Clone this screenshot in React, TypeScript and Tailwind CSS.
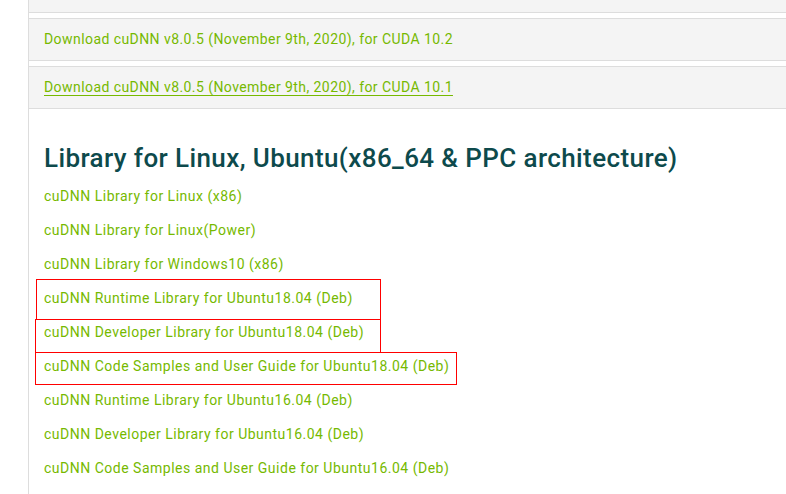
import React from 'react';

const downloads = [
  { label: 'Download cuDNN v8.0.5 (November 9th, 2020), for CUDA 10.2', hover: false },
  { label: 'Download cuDNN v8.0.5 (November 9th, 2020), for CUDA 10.1', hover: true },
];

const links = [
  'cuDNN Library for Linux (x86)',
  'cuDNN Library for Linux(Power)',
  'cuDNN Library for Windows10 (x86)',
  'cuDNN Runtime Library for Ubuntu18.04 (Deb)',
  'cuDNN Developer Library for Ubuntu18.04 (Deb)',
  'cuDNN Code Samples and User Guide for Ubuntu18.04 (Deb)',
  'cuDNN Runtime Library for Ubuntu16.04 (Deb)',
  'cuDNN Developer Library for Ubuntu16.04 (Deb)',
  'cuDNN Code Samples and User Guide for Ubuntu16.04 (Deb)',
];

export default function App() {
  return (
    <div className="w-[786px] h-[494px] overflow-hidden bg-white font-['Roboto',sans-serif]">
      <div className="ml-[28px] border-l border-[#dddddd] h-full flex flex-col">
        {/* previous panel, scrolled mostly out of view */}
        <div className="h-[13px] bg-[#f4f4f4] border-b border-[#dddddd]" />

        {downloads.map((d) => (
          <div
            key={d.label}
            className="mt-[5px] h-[43px] bg-[#f4f4f4] border-y border-[#dddddd] flex items-center pl-[15px]"
          >
            <a
              className={
                'text-[14px] text-[#76b900] tracking-[0.43px] ' +
                (d.hover ? 'underline underline-offset-[3px]' : '')
              }
            >
              {d.label}
            </a>
          </div>
        ))}

        {/* Linux / Ubuntu section */}
        <div className="pl-[15px] pt-[32px] flex flex-col">
          <h2 className="text-[26px] leading-[34px] font-medium tracking-[0.4px] text-[#0d4a4c]">
            Library for Linux, Ubuntu(x86_64 &amp; PPC architecture)
          </h2>

          <div className="relative mt-[4px] flex flex-col">
            {links.map((l) => (
              <div key={l} className="h-[34px] flex items-center">
                <a className="text-[14px] tracking-[0.5px] text-[#76b900]">{l}</a>
              </div>
            ))}

            {/* red annotation boxes drawn over the list */}
            <div className="absolute left-[-8px] top-[100px] w-[345px] h-[41px] border border-[#ff0000]" />
            <div className="absolute left-[-9px] top-[140px] w-[346px] h-[34px] border border-[#ff0000]" />
            <div className="absolute left-[-9px] top-[173px] w-[422px] h-[33px] border border-[#ff0000]" />
          </div>
        </div>
      </div>
    </div>
  );
}
